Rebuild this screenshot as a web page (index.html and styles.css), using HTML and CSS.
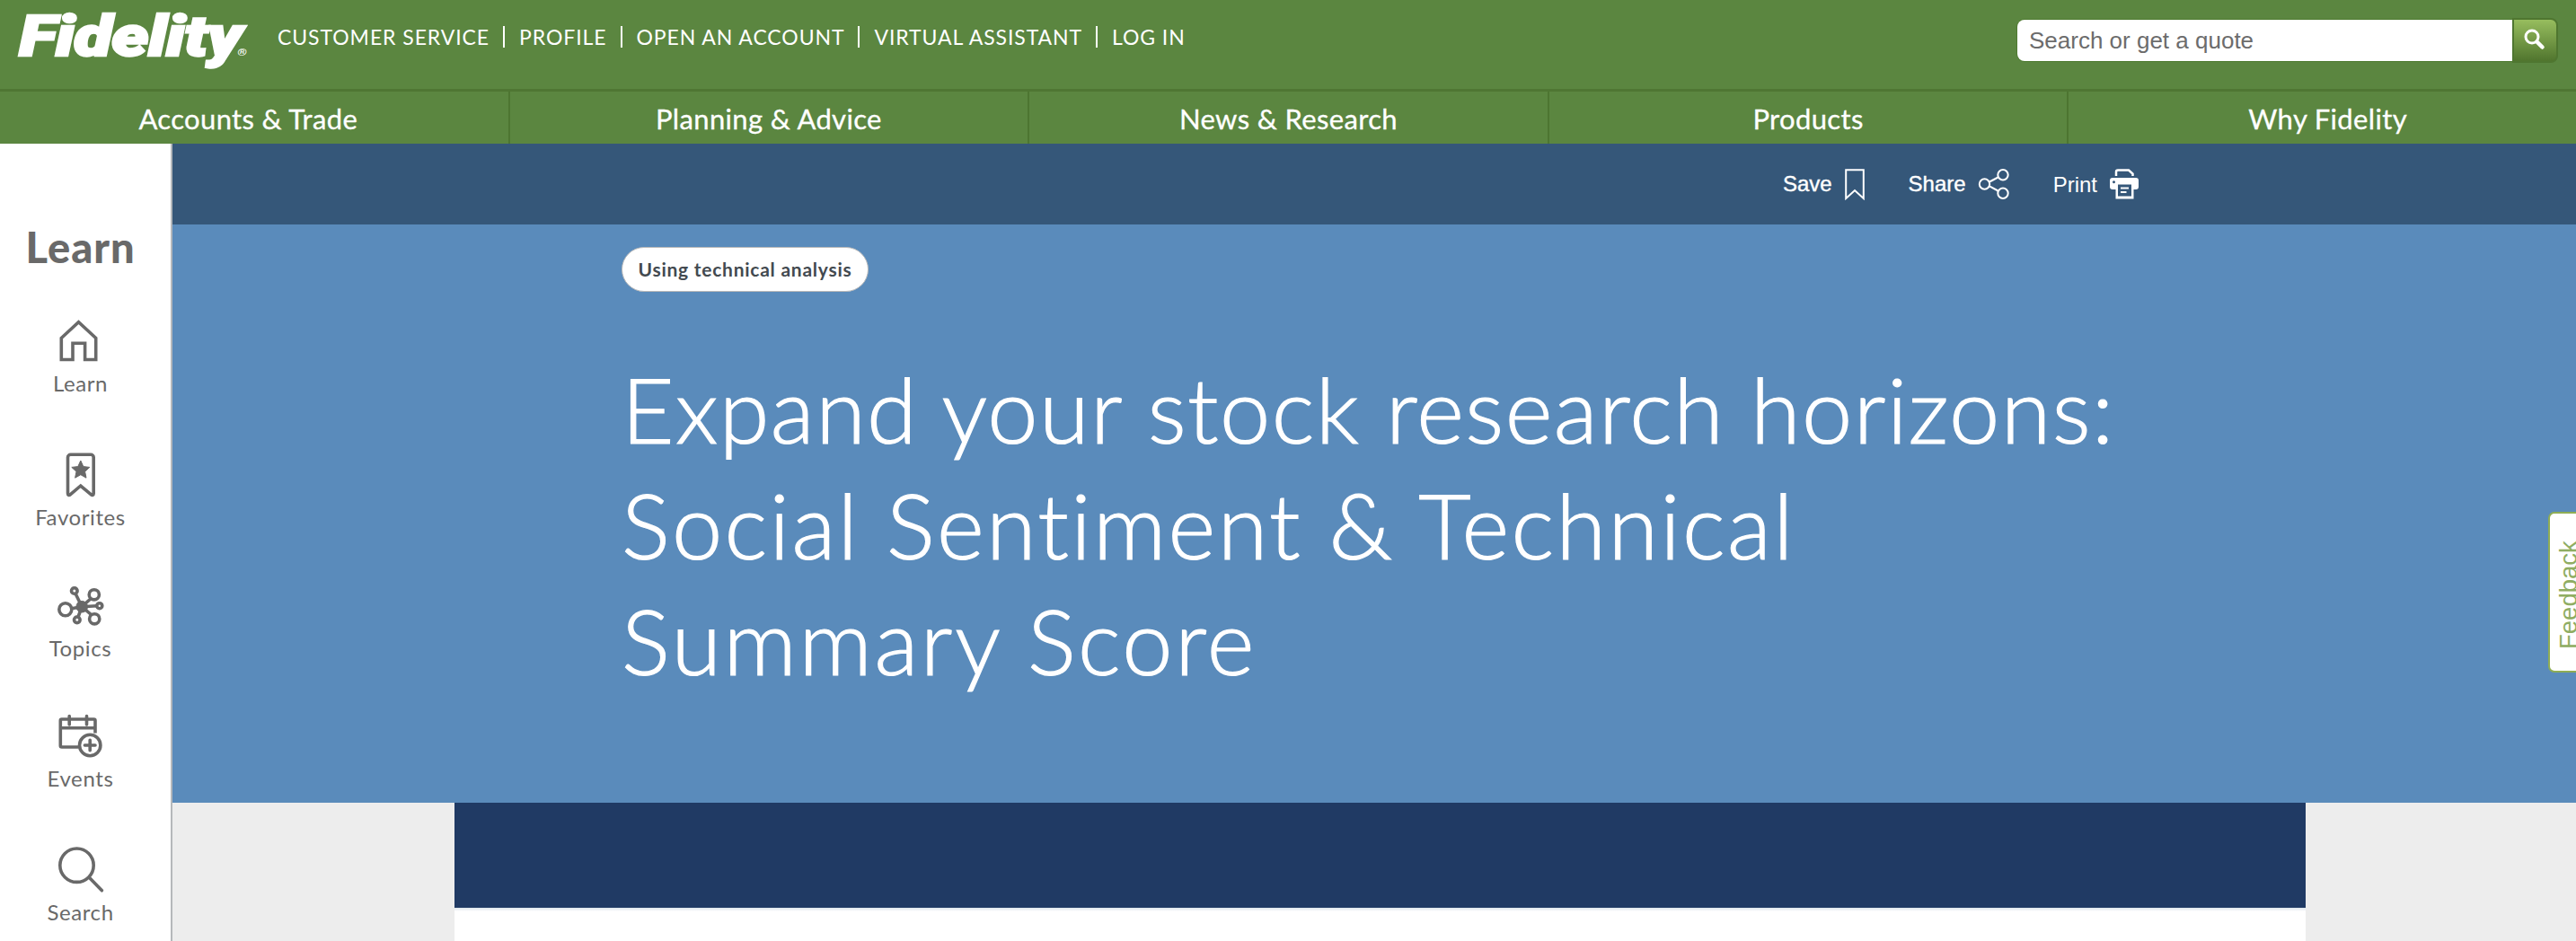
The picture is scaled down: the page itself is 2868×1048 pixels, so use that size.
FILE: index.html
```html
<!DOCTYPE html>
<html lang="en">
<head>
    <meta charset="utf-8"/>
    <meta content="width=device-width, initial-scale=1.0" name="viewport"/>
    <title>Expand your stock research horizons - Fidelity</title>
    <link rel="stylesheet" href="styles.css">
</head>
<body>
    <header class="header">
        <div class="top-bar">
            <a class="logo">Fidelity<span class="reg">®</span></a>
            <ul class="links">
                <li>CUSTOMER SERVICE</li>
                <li>PROFILE</li>
                <li>OPEN AN ACCOUNT</li>
                <li>VIRTUAL ASSISTANT</li>
                <li>LOG IN</li>
            </ul>
            <form class="search">
                <input type="text" placeholder="Search or get a quote"/>
                <button type="button" aria-label="Search">
                    <svg width="26" height="26" viewBox="0 0 26 26" fill="none" stroke="#fff">
                        <circle cx="10" cy="10" r="7" stroke-width="3"/>
                        <path d="M15.5 15.5L21.5 21.5" stroke-width="4.5" stroke-linecap="round"/>
                    </svg>
                </button>
            </form>
        </div>
        <nav class="nav">
            <a>Accounts &amp; Trade</a>
            <a>Planning &amp; Advice</a>
            <a>News &amp; Research</a>
            <a>Products</a>
            <a>Why Fidelity</a>
        </nav>
    </header>

    <div class="page">
        <aside class="sidebar">
            <div class="sidebar-title">Learn</div>
            <a class="item">
                <svg viewBox="0 0 52 52">
                    <path d="M4.3 22.5L23.5 4.8L42.7 22.5V46.5H30.6V28.3H17V46.5H4.3Z"/>
                </svg>
                <span>Learn</span>
            </a>
            <a class="item favorites">
                <svg viewBox="0 0 52 52">
                    <path d="M11.5 46.5V6.5a3.2 3.2 0 0 1 3.2-3.2H37a3.2 3.2 0 0 1 3.2 3.2V46.5c0 2-1.5 2.4-2.7 1.3L25.8 38L14.2 47.8c-1.2 1.1-2.7 .7-2.7-1.3Z"/>
                    <path class="solid" d="M25.8 10L28.8 16.6L35.8 17.4L30.6 22.2L32 29.2L25.8 25.7L19.6 29.2L21 22.2L15.8 17.4L22.8 16.6Z"/>
                </svg>
                <span>Favorites</span>
            </a>
            <a class="item topics">
                <svg viewBox="0 0 52 52">
                    <path d="M27.2 25.7L20 11M27.2 25.7L37.3 16.5M27.2 25.7L44 24.8M27.2 25.7L38 35M27.2 25.7L23 37M27.2 25.7L15.5 27.7"/>
                    <circle class="solid" cx="27.2" cy="25.7" r="6.3"/>
                    <circle cx="18.8" cy="8" r="3.3"/>
                    <circle cx="40.8" cy="12.3" r="5.6"/>
                    <circle cx="46.8" cy="24.7" r="3"/>
                    <circle cx="41.2" cy="39.3" r="5.6"/>
                    <circle cx="21.8" cy="40.3" r="3.3"/>
                    <circle cx="8.8" cy="28.7" r="7"/>
                </svg>
                <span>Topics</span>
            </a>
            <a class="item">
                <svg viewBox="0 0 52 52">
                    <path d="M42 22.5V8.5a1.5 1.5 0 0 0-1.5-1.5H4.8a1.5 1.5 0 0 0-1.5 1.5V36.5a1.5 1.5 0 0 0 1.5 1.5H23M3.3 16.7H42"/>
                    <path stroke-linecap="round" d="M13.2 3.5V13M32.5 3.5V13"/>
                    <circle cx="36.2" cy="36" r="11.7"/>
                    <path stroke-linecap="round" d="M36.2 30.2V41.8M30.4 36H42"/>
                </svg>
                <span>Events</span>
            </a>
            <a class="item">
                <svg viewBox="0 0 52 52">
                    <circle cx="21.5" cy="20.7" r="18.7"/>
                    <path stroke-linecap="round" d="M35.3 34.2L49.4 48.8"/>
                </svg>
                <span>Search</span>
            </a>
        </aside>

        <main class="main">
            <div class="tools">
                <a class="save">Save
                    <svg width="24" height="36" viewBox="0 0 24 36">
                        <path d="M2.2 2.2H21.8V34L12 25L2.2 34Z"/>
                    </svg>
                </a>
                <a class="share">Share
                    <svg width="36" height="36" viewBox="0 0 36 36">
                        <path d="M13 15.5L22.5 10.5M13 20.3L22.5 25.5"/>
                        <circle cx="7.5" cy="18" r="5.7"/>
                        <circle cx="28" cy="7.7" r="5.7"/>
                        <circle cx="28" cy="28.3" r="5.7"/>
                    </svg>
                </a>
                <a class="print"><span>Print</span>
                    <svg width="34" height="36" viewBox="0 0 34 36">
                        <path stroke-width="2.5" d="M8 9V4.5a2 2 0 0 1 2-2H22l4.5 4V9"/>
                        <path class="fill" d="M4 11H30a3 3 0 0 1 3 3V21a3 3 0 0 1-3 3H27.5V34.5H7.5V24H4a3 3 0 0 1-3-3V14a3 3 0 0 1 3-3ZM10 18.5V31.5H25V18.5ZM5.5 14.2a1.5 1.5 0 1 0 .01 0Z"/>
                        <path d="M13 22.5H22M13 27H19.5"/>
                    </svg>
                </a>
            </div>
            <section class="hero">
                <span class="tag">Using technical analysis</span>
                <h1>
                    <span class="line1">Expand your stock research horizons:</span>
                    <span class="line2">Social Sentiment &amp; Technical</span>
                    <span class="line3">Summary Score</span>
                </h1>
            </section>
            <section class="article">
                <div class="banner"></div>
            </section>
        </main>
    </div>

    <div class="feedback">Feedback</div>
</body>
</html>
```

FILE: styles.css
```css
* {
    box-sizing: border-box;
}
body {
    margin: 0;
    height: 1048px;
    overflow: hidden;
    position: relative;
    background-color: #fff;
    font-family: Lato, "Open Sans", sans-serif;
}
svg {
    display: block;
    flex-shrink: 0;
}
.header {
    height: 160px;
    background-color: #5b8640;
    color: #fff;
    overflow: hidden;
}
.top-bar {
    display: flex;
    align-items: flex-start;
    height: 99px;
    padding: 0 20px;
}
.logo {
    width: 288px;
    padding-left: 1px;
    font-family: Roboto, sans-serif;
    font-size: 62px;
    font-weight: 900;
    font-style: italic;
    line-height: 82px;
    letter-spacing: -0.5px;
    white-space: nowrap;
    -webkit-text-stroke: 2.4px #fff;
    transform: scaleX(1.26);
    transform-origin: left;
}
.reg {
    margin-left: -4px;
    font-size: 11px;
    letter-spacing: 0;
    -webkit-text-stroke: 0;
}
.links {
    display: flex;
    list-style: none;
    margin: 0;
    padding: 29px 0 0 1px;
    font-size: 23px;
    line-height: 24px;
    letter-spacing: 0.92px;
    white-space: nowrap;
}
.links li + li {
    border-left: 2px solid #fff;
    margin-left: 15px;
    padding-left: 16px;
}
.search {
    display: flex;
    align-items: center;
    margin: 20px 0 0 auto;
}
.search input {
    width: 551px;
    height: 46px;
    border: none;
    border-radius: 8px 0 0 8px;
    padding: 0 13px;
    background-color: #fff;
    box-shadow: 0 0 0 1px #4e7a30;
    font-family: "Liberation Sans", Arial, sans-serif;
    font-size: 26px;
}
.search input::placeholder {
    color: #6c6c6c;
    opacity: 1;
}
.search button {
    width: 51px;
    height: 50px;
    border: 2px solid #4f7630;
    border-radius: 0 8px 8px 0;
    padding: 0 0 2px 10px;
    background: linear-gradient(#97bd5e, #50752e);
}
.nav {
    display: grid;
    grid-template-columns: repeat(5, 1fr);
    height: 61px;
    margin: 0 -12px 0 -13px; /* outer cells run past the edges */
    border-top: 3px solid #4f7633;
    font-size: 31px;
    line-height: 60px;
    letter-spacing: 0.35px;
    text-align: center;
    -webkit-text-stroke: 0.3px #fff;
}
.nav a + a {
    border-left: 2px solid #4d7531;
}
.page {
    display: flex;
    height: 888px;
}
.sidebar {
    width: 192px;
    border-right: 2px solid #b5b8bb;
    padding-right: 11px;
    color: #696969;
    text-align: center;
}
.sidebar-title {
    margin: 88px 0 51px;
    font-size: 47px;
    font-weight: 900;
    line-height: 55px;
    letter-spacing: 1px;
}
.item {
    display: flex;
    flex-direction: column;
    align-items: center;
    gap: 6px;
    margin-bottom: 61px;
    font-size: 24px;
    line-height: 30px;
    letter-spacing: 0.6px;
}
.item svg {
    width: 52px;
    height: 52px;
    fill: none;
    stroke: #696969;
    stroke-width: 3.6;
}
.item .solid {
    fill: #696969;
    stroke-width: 1;
    stroke-linejoin: round;
}
.item.favorites {
    margin-bottom: 59px;
}
.item.topics {
    gap: 5px;
    margin-bottom: 57px;
}
.main {
    flex: 1;
}
.tools {
    display: flex;
    justify-content: flex-end;
    align-items: center;
    height: 90px;
    padding-right: 486px;
    background-color: #355779;
    color: #fff;
    font-family: "Liberation Sans", Arial, sans-serif;
    font-size: 24px;
}
.tools a {
    display: flex;
    align-items: center;
}
.tools svg {
    fill: none;
    stroke: #fff;
    stroke-width: 2;
}
.tools .fill {
    fill: #fff;
    fill-rule: evenodd;
    stroke: none;
}
.save, .share {
    -webkit-text-stroke: 0.4px #fff;
}
.save {
    gap: 13px;
    margin-right: 48px;
}
.share {
    gap: 13px;
    margin-right: 48px;
}
.print {
    gap: 13px;
}
.print span {
    padding-top: 2px;
}
.hero {
    height: 644px;
    padding: 25px 0 0 500px;
    background-color: #5a8bbb;
}
.tag {
    display: block;
    width: 275px;
    height: 50px;
    border: 1px solid #b9b9b9;
    border-radius: 25px;
    background-color: #fff;
    color: #434a50;
    font-size: 21px;
    font-weight: 700;
    line-height: 47px;
    letter-spacing: 0.75px;
    text-align: center;
    white-space: nowrap;
}
.hero h1 {
    margin: 66px 0 0;
    color: #fff;
    font-size: 101px;
    font-weight: 300;
    line-height: 129px;
    white-space: nowrap;
    -webkit-text-stroke: 1.2px #fff;
}
.hero h1 span {
    display: block;
}
.hero .line1 {
    letter-spacing: 1.4px;
}
.hero .line2 {
    letter-spacing: 2.35px;
}
.hero .line3 {
    letter-spacing: 2.6px;
}
.article {
    height: 154px;
    padding: 0 301px 0 314px;
    background: #ededed;
}
.banner {
    height: 154px;
    background: linear-gradient(#203a64 117px, #dde5ec 117px, #fff 121px);
}
.feedback {
    position: absolute;
    right: -10px;
    top: 570px;
    width: 41px;
    height: 179px;
    border: 2px solid #8fad55;
    border-radius: 0 7px 7px 0;
    padding-bottom: 6px;
    background-color: #fff;
    color: #8fad62;
    font-family: "Liberation Sans", Arial, sans-serif;
    font-size: 27.5px;
    line-height: 42px;
    text-align: center;
    writing-mode: vertical-rl;
    transform: rotate(180deg);
}
```
